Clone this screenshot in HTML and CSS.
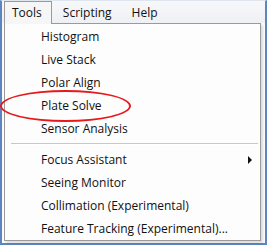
FILE: index.html
```html
<!DOCTYPE html>
<html lang="en">
<head>
  <meta charset="UTF-8">
  <title>Tools menu</title>
  <link rel="stylesheet" href="styles.css">
</head>
<body>
  <div class="window">
    <div class="menubar">
      <span class="top-item open">Tools</span>
      <span class="top-item">Scripting</span>
      <span class="top-item">Help</span>
    </div>
    <div class="dropdown">
      <div class="item">Histogram</div>
      <div class="item">Live Stack</div>
      <div class="item">Polar Align</div>
      <div class="item">Plate Solve</div>
      <div class="item">Sensor Analysis</div>
      <div class="separator"></div>
      <div class="item has-sub">Focus Assistant <span class="arrow"></span></div>
      <div class="item">Seeing Monitor</div>
      <div class="item">Collimation (Experimental)</div>
      <div class="item">Feature Tracking (Experimental)...</div>
    </div>
    <div class="highlight"></div>
  </div>
</body>
</html>
```

FILE: styles.css
```css
* {
  box-sizing: border-box;
}
body {
  margin: 0;
  width: 267px;
  height: 245px;
  overflow: hidden;
  font-family: "Open Sans", "Noto Sans", sans-serif;
  font-size: 12px;
  color: #111;
}
.window {
  position: relative;
  height: 245px;
  border: 2px solid #5b86c1;
  border-top: 1px solid #dfe6ef;
  background: #fbfbfb;
}
.menubar {
  display: flex;
  height: 22px;
  background: linear-gradient(#f7f8fa, #eef0f4);
  padding-left: 2px;
}
.top-item {
  padding: 2px 9px 0 9px;
  line-height: 18px;
  border: 1px solid transparent;
  border-bottom: none;
}
.top-item.open {
  padding: 2px 9px 0 7px;
  margin-right: 1px;
  background: #f6f6f6;
  border-color: #9a9a9a;
  position: relative;
  z-index: 2;
  margin-bottom: -1px;
}
.dropdown {
  margin-left: 2px;
  width: 257px;
  background: #fdfdfd;
  border: 1px solid #9a9a9a;
  box-shadow: 2px 2px 2px rgba(0, 0, 0, 0.12);
  padding: 1px 0 0 4px;
  height: 218px;
}
.item {
  display: flex;
  align-items: center;
  height: 23px;
  padding-left: 32px;
  padding-right: 8px;
}
.has-sub {
  justify-content: space-between;
}
.arrow {
  width: 0;
  height: 0;
  border-top: 4px solid transparent;
  border-bottom: 4px solid transparent;
  border-left: 4px solid #111;
}
.separator {
  height: 2px;
  margin: 3px 2px;
  border-top: 1px solid #c8c8c8;
  border-bottom: 1px solid #fff;
}
.highlight {
  position: absolute;
  left: -2px;
  top: 89px;
  width: 131px;
  height: 32px;
  border: 2.5px solid #e8191c;
  border-radius: 50%;
}
```
